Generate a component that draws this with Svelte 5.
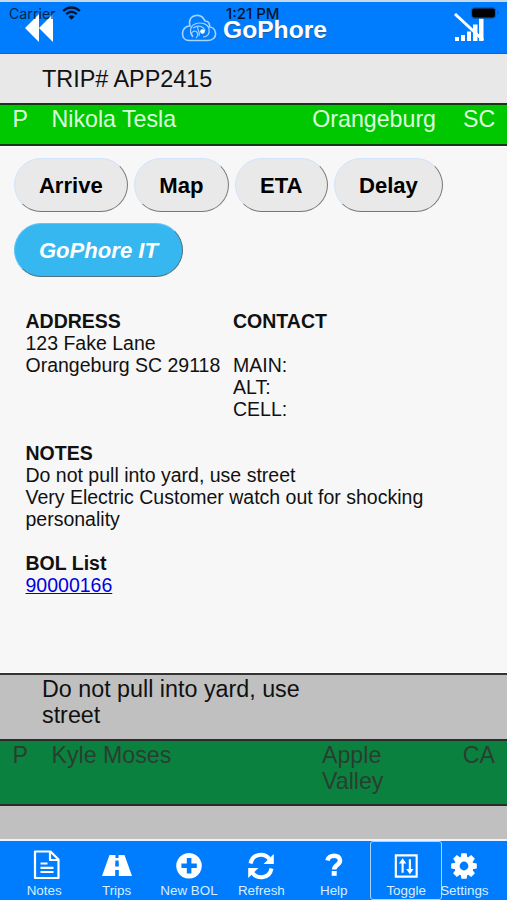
<script lang="ts">
	const actions = ['Arrive', 'Map', 'ETA', 'Delay'];

	const tabs = [
		{ id: 'notes', label: 'Notes' },
		{ id: 'trips', label: 'Trips' },
		{ id: 'new', label: 'New BOL' },
		{ id: 'refresh', label: 'Refresh' },
		{ id: 'help', label: 'Help' },
		{ id: 'toggle', label: 'Toggle' },
		{ id: 'settings', label: 'Settings' }
	];

	const stop = {
		street: '123 Fake Lane',
		city: 'Orangeburg SC 29118',
		notes: [
			'Do not pull into yard, use street',
			'Very Electric Customer watch out for shocking personality'
		],
		bol: '90000166'
	};

	const teeth = [0, 45, 90, 135, 180, 225, 270, 315];
</script>

<div class="app">
	<header>
		<svg class="back" viewBox="0 0 29 28" width="29" height="28">
			<path d="M14 0V28L0 14ZM28 0V28L14 14Z" fill="#fff" />
		</svg>
		<div class="brand">
			<svg viewBox="0 0 36 28" width="36" height="28" fill="none" stroke="#a9d4ff">
				<path d="M8 26.5H27C32 26.5 35 23 34.5 19C34 15.5 31.5 13 28.5 13C29 9 27 7 24 7C22 2.5 18.5 1 15 1.5C11 2 8.5 5 8.5 9C8.5 10.5 9 11.5 9 12C4.5 12 1.5 15 1.5 19.5C1.5 23.5 4 26.5 8 26.5Z" stroke-width="1.6" />
				<path d="M12 23C8 19 9 12 14 10C20 7.5 27 10 28 15C29 20 26 23 22 23M12 14C18 10 23 13 24 17M15 24C18 21 17 17 13 17C10 18 10 21 12 22M17 13C15 15 20 17 18 22" stroke-width="1.2" />
				<circle cx="21.5" cy="17.5" r="2.3" fill="#fff" stroke="none" />
			</svg>
			<h1>GoPhore</h1>
		</div>
		<svg class="signal" viewBox="0 0 31 29" width="31" height="29">
			<path d="M1 24h4v4H1zM7 22h4v6H7zM13 18.5h4V28h-4zM19 11.5h4.5V28H19zM25 5h4.5v23H25z" fill="#fff" />
			<path d="M1 1L29 27" stroke="#fff" stroke-width="3" />
		</svg>
		<div class="status">
			<span class="carrier">Carrier</span>
			<svg class="wifi" viewBox="0 0 19 14" width="19" height="14" fill="none" stroke="#03152b">
				<path d="M1.2 5C6 .3 13 .3 17.8 5M4.2 8.2C7.5 5.2 11.5 5.2 14.8 8.2" stroke-width="2.3" />
				<path d="M6.5 10.7Q9.5 8 12.5 10.7L9.5 13.7Z" fill="#03152b" stroke="none" />
			</svg>
			<span class="time">1:21 PM</span>
			<svg class="battery" viewBox="0 0 31 12" width="31" height="12">
				<rect x="2.5" y=".8" width="24" height="10.4" rx="3" fill="#000" stroke="#0b5fb8" stroke-width="1.2" />
				<path d="M28.5 4q2 2 0 4z" fill="#174783" />
			</svg>
		</div>
	</header>

	<div class="trip">TRIP# APP2415</div>
	<div class="row row--active">
		<span class="kind">P</span>
		<span class="name">Nikola Tesla</span>
		<span class="city">Orangeburg</span>
		<span class="state">SC</span>
	</div>

	<main>
		<div class="actions">
			{#each actions as action}
				<button>{action}</button>
			{/each}
			<button class="go">GoPhore IT</button>
		</div>

		<section class="details">
			<div class="columns">
				<div>
					<h2>ADDRESS</h2>
					<p>{stop.street}</p>
					<p>{stop.city}</p>
				</div>
				<div>
					<h2>CONTACT</h2>
					<br />
					<p>MAIN:</p>
					<p>ALT:</p>
					<p>CELL:</p>
				</div>
			</div>
			<div>
				<h2>NOTES</h2>
				{#each stop.notes as note}
					<p>{note}</p>
				{/each}
			</div>
			<div>
				<h2>BOL List</h2>
				<a href="#bol">{stop.bol}</a>
			</div>
		</section>
	</main>

	<div class="memo"><p>Do not pull into yard, use street</p></div>
	<div class="row row--next">
		<span class="kind">P</span>
		<span class="name">Kyle Moses</span>
		<span class="city">Apple Valley</span>
		<span class="state">CA</span>
	</div>
	<div class="rest"></div>

	<nav>
		{#each tabs as tab}
			<div class="tab tab--{tab.id}">
				<svg viewBox="0 0 32 32" width="32" height="32" fill="#fff">
					{#if tab.id === 'notes'}
						<path d="M7 2.5H22.5L30.5 10.5V29H7ZM22 3V11H30.5M12.5 14.5h7M12.5 18.8h13M12.5 23h13" fill="none" stroke="#fff" stroke-width="2.2" stroke-linejoin="round" />
					{:else if tab.id === 'trips'}
						<path fill-rule="evenodd" d="M8.5 6H14.5V9H17.5V6H23.5L31 27H17.8V21H14.2V27H1ZM14.4 11.5L14.1 17.5H17.9L17.6 11.5Z" />
					{:else if tab.id === 'new'}
						<path fill-rule="evenodd" d="M16 4a12.8 12.8 0 1 0 .01 0ZM13.8 9h4.6v5.4h5.4v4.6h-5.4v5.4h-4.6v-5.4H8.4v-4.6h5.4Z" />
					{:else if tab.id === 'refresh'}
						<path d="M5.5 14.5C7.5 4.5 19 3.2 24.5 10M26.5 19.5C24.5 29.5 13 30.8 7.5 24" fill="none" stroke="#fff" stroke-width="4" />
						<path d="M28.8 5V15H18.5ZM3.2 29V19H13.5Z" />
					{:else if tab.id === 'help'}
						<path d="M9.5 11.5C10.5 5.5 22 5 22 11.5C22 16 16.2 16 16.2 20.5" fill="none" stroke="#fff" stroke-width="4.6" />
						<path d="M13.7 22h5v4.8h-5z" />
					{:else if tab.id === 'toggle'}
						<path d="M5.5 5.5h21.5v22H5.5ZM12.5 23.5V11M20 9.5V22" fill="none" stroke="#fff" stroke-width="2.2" />
						<path d="M8.7 14L12.5 8.5L16.3 14ZM16.2 19.5L20 25L23.8 19.5Z" />
					{:else}
						{#each teeth as angle}
							<path d="M13.4 4.2h5.2l1 6h-7.2z" transform="rotate({angle} 16 17)" />
						{/each}
						<circle cx="16" cy="17" r="7" fill="none" stroke="#fff" stroke-width="5.2" />
					{/if}
				</svg>
				<span>{tab.label}</span>
			</div>
		{/each}
	</nav>
</div>

<style>
	:global(body) { background: #c0c0c0; }

	.app {
		width: 507px;
		height: 900px;
		overflow: hidden;
		box-sizing: border-box;
		display: flex;
		flex-direction: column;
		font-family: 'Liberation Sans', Arial, sans-serif;
		background: #c0c0c0;
		color: #111;
	}
	.app > * { box-sizing: border-box; flex-shrink: 0; }

	header {
		position: relative;
		height: 54px;
		border-top: 2px solid #c7d8e8;
		border-bottom: 1px solid #345d8c;
		background: #007dff;
		display: flex;
		align-items: flex-start;
		justify-content: space-between;
		padding: 12px 22px 0 25px;
	}
	.brand { display: flex; gap: 6px; }
	h1 {
		margin: 2px 0 0;
		font-size: 24.6px;
		line-height: 28px;
		color: #fff;
		text-shadow: 0 1px 1px #225b9a;
	}
	.signal { margin-top: -1px; }

	.status {
		position: absolute;
		inset: 3px 7px auto 9px;
		height: 18px;
		display: flex;
		align-items: center;
		font: 15px/18px Inter, sans-serif;
		color: #03152b;
	}
	.carrier { width: 53px; font-size: 14.2px; opacity: 0.85; }
	.time { margin-left: 145px; font-size: 15px; font-weight: 500; }
	.wifi { margin-top: -3px; }
	.battery { margin: -2px 0 0 auto; }

	.trip {
		height: 49px;
		padding: 12px 42px 0;
		background: #e8e8e8;
		font-size: 23.4px;
		line-height: 26px;
	}

	.row {
		display: grid;
		padding: 1px 12px 0 12.5px;
		font-size: 23.2px;
		line-height: 26px;
		border: solid #2b2b2b;
		border-width: 2px 0;
	}
	.state { text-align: right; }
	.row--active {
		height: 43px;
		grid-template-columns: 39px 1fr 152px 32px;
		background: #00c800;
		color: #dcffdc;
		border-color: #173517;
		white-space: nowrap;
	}
	.row--active .city { padding-right: 27px; text-align: right; }
	.row--next {
		height: 67px;
		grid-template-columns: 39px 1fr 90px 83px;
		background: #0b8140;
		color: #283f30;
	}

	main {
		height: 527px;
		padding: 11px 13px 0 13.5px;
		background: #f7f7f7;
		border-top: 1px solid #fff;
		border-bottom: 1px solid #fff;
	}
	.actions { display: flex; flex-wrap: wrap; gap: 11px 5.7px; }
	button {
		height: 54px;
		padding: 2px 24.4px 0;
		border: 2px outset;
		border-color: #d3e3fb #777 #777 #d3e3fb;
		border-style: solid;
		border-width: 1.5px;
		border-radius: 27px;
		background: #e9e9e9;
		font: bold 22.1px 'Liberation Sans', Arial, sans-serif;
		color: #000;
	}
	.go {
		background: #36b7f0;
		border-color: #63c5f5 #526f7d #526f7d #63c5f5;
		color: #fff;
		font-style: italic;
	}

	.details {
		display: flex;
		flex-direction: column;
		gap: 22px;
		margin: 33px 0 0 12px;
		font-size: 19.5px;
		line-height: 22px;
	}
	.columns { display: grid; grid-template-columns: 207.5px 1fr; }
	h2, p { margin: 0; font-size: inherit; }
	.details p { max-width: 420px; }
	a { color: #0000e0; }

	.memo {
		height: 66px;
		border-top: 2px solid #333;
		padding: 1px 42px 0;
		font-size: 23.3px;
		line-height: 26px;
	}
	.memo p { width: 270px; }
	.rest { height: 33px; }

	nav {
		height: 61px;
		border-top: 2px solid #e6f5ff;
		background: #007dff;
		display: flex;
		padding-left: 8px;
		color: #fff;
	}
	.tab {
		box-sizing: border-box;
		width: 72.4px;
		padding-top: 8px;
		display: flex;
		flex-direction: column;
		align-items: center;
		flex-shrink: 0;
		font-size: 13.4px;
		line-height: 16px;
	}
	.tab span { margin-top: 2px; color: #d9eeff; white-space: nowrap; }
	.tab--toggle {
		border: 1px solid #a9d5ff;
		border-radius: 3px;
		height: 59px;
	}
	.tab--settings { width: 48px; margin-left: -2px; }
</style>
